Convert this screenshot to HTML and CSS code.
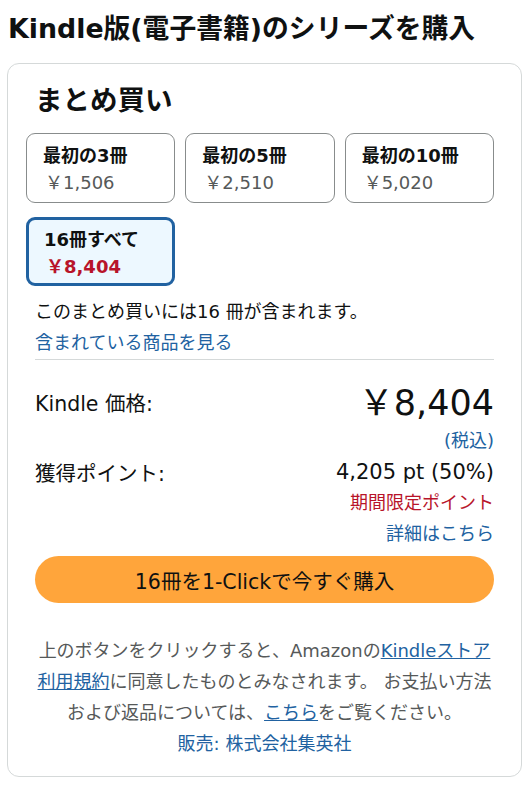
FILE: index.html
```html
<!DOCTYPE html>
<html lang="ja">
<head>
<meta charset="utf-8">
<link rel="stylesheet" href="styles.css">
</head>
<body>
<h1 class="page-title">Kindle版(電子書籍)のシリーズを購入</h1>
<section class="card">
  <h2 class="card-title">まとめ買い</h2>
  <div class="options">
    <div class="option">
      <div class="opt-name">最初の3冊</div>
      <div class="opt-price">￥1,506</div>
    </div>
    <div class="option">
      <div class="opt-name">最初の5冊</div>
      <div class="opt-price">￥2,510</div>
    </div>
    <div class="option">
      <div class="opt-name">最初の10冊</div>
      <div class="opt-price">￥5,020</div>
    </div>
    <div class="option selected">
      <div class="opt-name">16冊すべて</div>
      <div class="opt-price">￥8,404</div>
    </div>
  </div>
  <p class="includes">このまとめ買いには16 冊が含まれます。<br><a class="link" href="#">含まれている商品を見る</a></p>
  <div class="price-row">
    <span class="label">Kindle 価格:</span>
    <span class="big-price">￥8,404</span>
  </div>
  <div class="right-line"><a class="link" href="#">(税込)</a></div>
  <div class="points-row">
    <span class="label">獲得ポイント:</span>
    <span class="points">4,205 pt (50%)</span>
  </div>
  <div class="right-line red">期間限定ポイント</div>
  <div class="right-line"><a class="link" href="#">詳細はこちら</a></div>
  <button class="buy">16冊を1-Clickで今すぐ購入</button>
  <p class="terms">上のボタンをクリックすると、Amazonの<a class="ulink" href="#">Kindleストア利用規約</a>に同意したものとみなされます。 お支払い方法および返品については、<a class="ulink" href="#">こちら</a>をご覧ください。</p>
  <p class="seller">販売: 株式会社集英社</p>
</section>
</body>
</html>
```

FILE: styles.css
```css
body {
  margin: 8px 7px;
  font-family: "DejaVu Sans", "Noto Sans CJK JP", sans-serif;
  color: #0f1111;
  background: #fff;
}
.page-title {
  margin: 4px 0 0 1px;
  font-size: 26.8px;
  line-height: 34px;
  font-weight: 700;
  white-space: nowrap;
}
.card {
  margin-top: 17px;
  border: 1px solid #d5d9d9;
  border-radius: 12px;
  padding: 19px 27px 17px 27px;
}
.card-title {
  margin: 0;
  font-size: 27.5px;
  line-height: 34px;
  font-weight: 700;
}
.options {
  margin: 16px 0 0 -9px;
  display: grid;
  grid-template-columns: repeat(3, 1fr);
  column-gap: 10px;
  row-gap: 14px;
}
.option {
  height: 70px;
  box-sizing: border-box;
  border: 1px solid #888c8c;
  border-radius: 9px;
  padding: 10px 16px 0;
}
.option.selected {
  height: 69px;
  border: 3px solid #2162a1;
  background: #edf8ff;
  padding: 8px 14px 0 15px;
}
.opt-name {
  font-size: 18px;
  line-height: 24px;
  font-weight: 700;
  white-space: nowrap;
}
.opt-price {
  margin-top: 2px;
  font-size: 18px;
  line-height: 26px;
  color: #565959;
  padding-left: 2px;
}
.selected .opt-price {
  color: #b8142a;
  font-weight: 700;
}
.includes {
  margin: 10px 0 0;
  font-size: 18px;
  line-height: 31px;
  border-bottom: 1px solid #d5d9d9;
  padding-bottom: 1px;
}
.link {
  color: #2162a1;
  text-decoration: none;
}
.price-row {
  margin-top: 21px;
  display: flex;
  justify-content: space-between;
  align-items: center;
  height: 44px;
}
.label {
  font-size: 20.5px;
  margin-top: -3px;
}
.big-price {
  font-size: 35px;
  line-height: 44px;
}
.right-line {
  text-align: right;
  font-size: 18px;
  line-height: 31px;
}
.red {
  color: #b8142a;
}
.points-row {
  display: flex;
  justify-content: space-between;
  align-items: center;
  height: 31px;
}
.points-row .label {
  margin-top: 0;
}
.points {
  font-size: 21px;
}
.buy {
  display: block;
  width: 100%;
  margin-top: 7px;
  height: 47px;
  border: none;
  border-radius: 24px;
  background: #ffa53b;
  font-family: inherit;
  font-size: 20.5px;
  color: #0f1111;
}
.terms {
  margin: 32px 0 0;
  text-align: center;
  font-size: 18px;
  line-height: 31px;
  color: #565959;
}
.ulink {
  color: #2162a1;
  text-decoration: underline;
}
.seller {
  margin: 0;
  text-align: center;
  font-size: 18px;
  line-height: 31px;
  color: #2162a1;
}
```
